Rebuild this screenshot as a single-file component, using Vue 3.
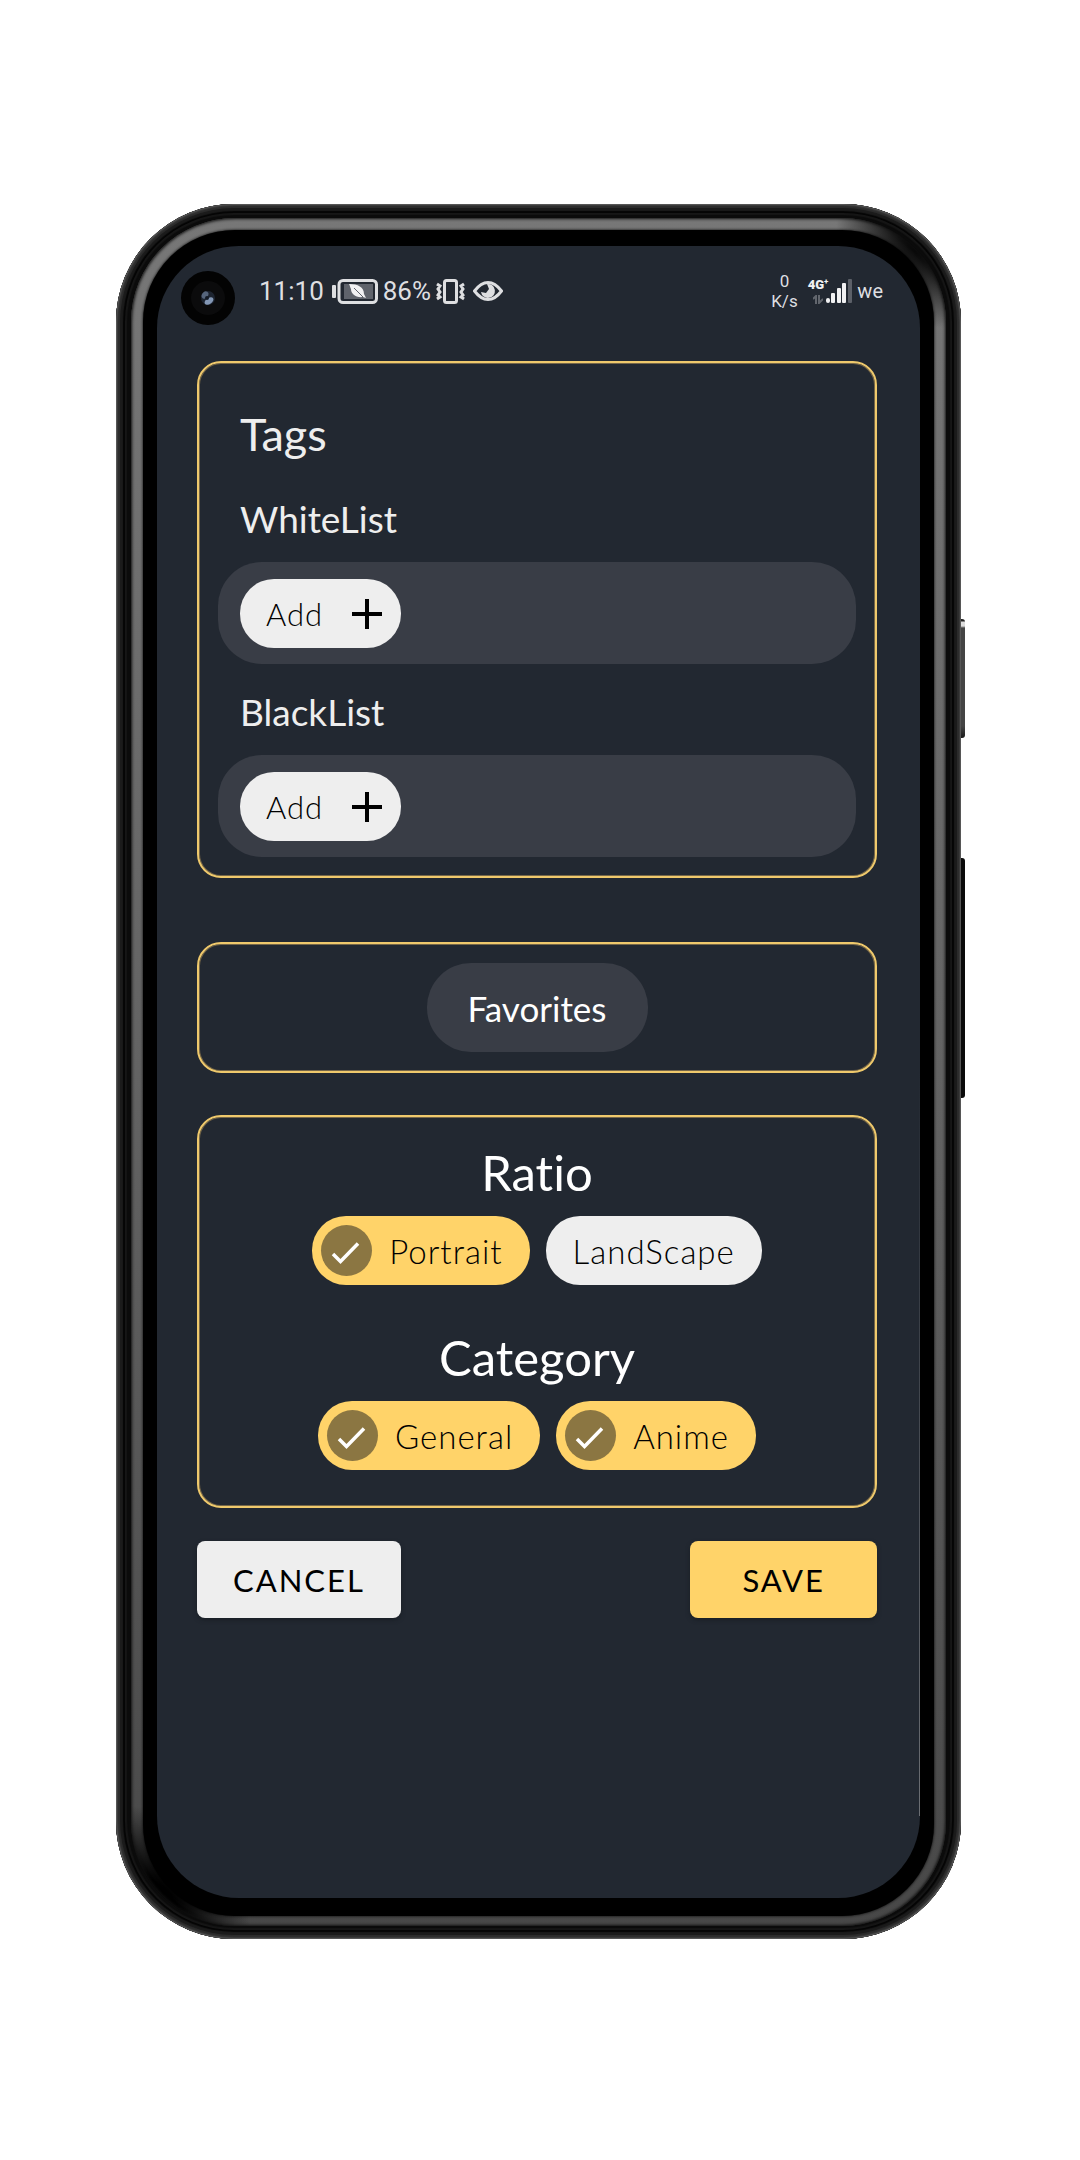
<script setup>
import { ref } from 'vue'

const lists = ['WhiteList', 'BlackList']

const groups = ref([
  {
    title: 'Ratio',
    options: [
      { label: 'Portrait', checked: true },
      { label: 'LandScape', checked: false },
    ],
  },
  {
    title: 'Category',
    options: [
      { label: 'General', checked: true },
      { label: 'Anime', checked: true },
    ],
  },
])
</script>

<template>
  <div class="page">
    <div class="phone">
      <span class="side-key power"></span>
      <span class="side-key volume"></span>
      <div class="ring">
        <div class="bezel">
          <div class="screen">
            <span class="glint"></span>
            <span class="camera">
              <svg width="54" height="54" viewBox="0 0 54 54" aria-hidden="true">
                <circle cx="27" cy="27" r="27" fill="#030303" />
                <circle cx="27" cy="27" r="17" fill="#0b0b0c" />
                <circle cx="27" cy="27" r="7" fill="#1d2430" />
                <ellipse cx="24" cy="24" rx="3" ry="4" fill="#56657c" transform="rotate(35 24 24)" />
                <ellipse cx="28" cy="30" rx="5" ry="3" fill="#8397b5" transform="rotate(-35 28 30)" />
                <circle cx="26" cy="27" r="2" fill="#141a25" />
              </svg>
            </span>

            <header class="status">
              <div class="status-left">
                <span class="clock">11:10</span>
                <svg class="battery" width="46" height="25" viewBox="0 0 46 25" aria-hidden="true">
                  <rect x="0" y="6" width="4" height="13" rx="1" fill="#dedfe1" />
                  <rect x="7" y="1.500" width="37.500" height="22" rx="4" fill="none" stroke="#dedfe1" stroke-width="3" />
                  <rect x="12" y="5" width="29" height="15" fill="#5f636b" />
                  <path d="M17 5c9 0 15 3 15 10l2 4-3-1c-7 1-12-3-12-8-1-2-1-3-2-5z" fill="#f1f1f2" />
                  <path d="M22 9l9 9" stroke="#5f636b" stroke-width="1" />
                </svg>
                <span class="percent">86%</span>
                <svg class="vibrate" width="29" height="25" viewBox="0 0 29 25" aria-hidden="true" fill="none" stroke="#dedfe1">
                  <rect x="8.500" y="1.500" width="12" height="22" rx="2" stroke-width="3" />
                  <path d="M1 5l3 2-2 3 2 3-2 3 2 2-3 2M28 5l-3 2 2 3-2 3 2 3-2 2 3 2" stroke-width="3" />
                </svg>
                <svg class="eye" width="30" height="20" viewBox="0 0 30 20" aria-hidden="true">
                  <path d="M1.500 10C6 4 10 1.500 15 1.500S24 4 28.500 10C24 16 20 18.500 15 18.500S6 16 1.500 10z" fill="none" stroke="#dedfe1" stroke-width="3" />
                  <path d="M14 3a7 7 0 1 1-6 8l5 1 3-4z" fill="#dedfe1" />
                </svg>
              </div>
              <div class="status-right">
                <div class="speed"><span>0</span><span>K/s</span></div>
                <div class="network">
                  <span class="gen">4G<sup>+</sup></span>
                  <svg width="10" height="9" viewBox="0 0 10 9" aria-hidden="true" fill="none" stroke="#62666d" stroke-width="2">
                    <path d="M0 4l3-3v8M6 0v8l4-4" />
                  </svg>
                </div>
                <svg class="bars" width="26" height="24" viewBox="0 0 26 24" aria-hidden="true" fill="#f1f1f2">
                  <rect x="0" y="19" width="4" height="5" rx="2" />
                  <rect x="5" y="14" width="4" height="10" rx="1" />
                  <rect x="11" y="9" width="4" height="15" rx="1" />
                  <rect x="16" y="4" width="4" height="20" rx="1" />
                  <rect x="22" y="0" width="4" height="24" rx="1" fill="#5c6068" />
                </svg>
                <span class="carrier">we</span>
              </div>
            </header>

            <main class="content">
              <section class="card tags">
                <h1>Tags</h1>
                <template v-for="name in lists" :key="name">
                  <h2>{{ name }}</h2>
                  <div class="tray">
                    <button type="button" class="add">
                      Add
                      <svg width="30" height="30" viewBox="0 0 30 30" aria-hidden="true">
                        <path d="M15 0v30M0 15h30" stroke="#000" stroke-width="4" />
                      </svg>
                    </button>
                  </div>
                </template>
              </section>

              <section class="card favorites">
                <button type="button" class="fav">Favorites</button>
              </section>

              <section class="card filters">
                <fieldset v-for="group in groups" :key="group.title">
                  <legend>{{ group.title }}</legend>
                  <div class="chips">
                    <label
                      v-for="option in group.options"
                      :key="option.label"
                      class="chip"
                      :class="{ on: option.checked }"
                    >
                      <input v-model="option.checked" type="checkbox" />
                      <span v-if="option.checked" class="mark">
                        <svg width="51" height="51" viewBox="0 0 51 51" aria-hidden="true">
                          <path d="M12 29l7.500 7.500L37 18.500" fill="none" stroke="#fff" stroke-width="3.500" />
                        </svg>
                      </span>
                      {{ option.label }}
                    </label>
                  </div>
                </fieldset>
              </section>

              <div class="actions">
                <button type="button" class="action cancel">CANCEL</button>
                <button type="button" class="action save">SAVE</button>
              </div>
            </main>
          </div>
        </div>
      </div>
    </div>
  </div>
</template>

<style>
body {
  background: #fff;
}
</style>

<style scoped>
.page {
  padding: 204px 119px 221px 116px;
  font-family: Lato, "Open Sans", sans-serif;
  font-variant-ligatures: none;
}

button {
  border: 0;
  margin: 0;
  font-family: inherit;
  font-variant-ligatures: none;
  cursor: pointer;
}

.phone {
  position: relative;
  padding: 14px 15px 13px;
  border-radius: 118px;
  background: #0b0b0b;
  box-shadow:
    inset 0 0 2px 1px #666,
    inset 0 0 0 4px #2b2b2b,
    inset 0 0 1px 7px #1b1b1b,
    inset 0 0 0 9px #050505,
    inset 0 0 1px 11px #161616;
}

.side-key {
  position: absolute;
  left: 100%;
  width: 4px;
  border-radius: 0 3px 3px 0;
}

.power {
  top: 415px;
  height: 119px;
  background: linear-gradient(#222 0 2px, #ddd 3px 7px, #444 9px 107px, #1a1a1a);
}

.volume {
  top: 654px;
  height: 240px;
  background: #0a0a0a;
}

.ring {
  padding: 12px 12px 10px;
  border-radius: 104px;
  background:
    radial-gradient(circle at 100% 0, #000 40px, transparent 110px),
    radial-gradient(circle at 0 100%, #000 50px, transparent 120px),
    linear-gradient(#777, #636363 50%, #484848);
  box-shadow: inset 0 0 3px 1px #111;
}

.bezel {
  padding: 16px 14px 18px;
  border-radius: 92px;
  background: #000;
  box-shadow: 0 0 3px #000;
}

.screen {
  position: relative;
  padding-bottom: 280px;
  border-radius: 82px;
  background: #222831;
}

.glint {
  position: absolute;
  right: 0;
  top: 50%;
  bottom: 82px;
  width: 1px;
  background: linear-gradient(transparent, #6b6e73);
}

.camera {
  position: absolute;
  left: 24px;
  top: 25px;
  display: flex;
}

.status {
  display: flex;
  justify-content: space-between;
  align-items: center;
  height: 90px;
  padding: 0 37px 0 102px;
  color: #dedfe1;
  font-family: Roboto, sans-serif;
}

.status-left,
.status-right {
  display: flex;
  align-items: center;
}

.clock,
.percent {
  font-size: 26px;
  line-height: 32px;
}

.battery {
  margin: 0 5px 0 8px;
}

.vibrate {
  margin: 0 8px 0 5px;
}

.speed {
  display: flex;
  flex-direction: column;
  align-items: center;
  margin-right: 10px;
  font-size: 17px;
  line-height: 20px;
}

.network {
  display: flex;
  flex-direction: column;
  align-items: center;
  gap: 4px;
  height: 26px;
  margin-right: -2px;
}

.gen {
  font-size: 13px;
  line-height: 13px;
  font-weight: 900;
  color: #f1f1f2;
}

.gen sup {
  font-size: 8px;
  line-height: 1px;
}

.bars {
  margin-right: 5px;
}

.carrier {
  font-size: 20px;
  line-height: 28px;
}

.content {
  padding: 25px 43px 0 40px;
}

.card {
  border: 2px solid #efc96c;
  border-radius: 24px;
  box-shadow: inset 0 0 0 1px #756648;
}

.tags {
  padding: 35px 19px 19px;
}

h1,
h2 {
  margin: 0;
  padding-left: 22px;
  color: #eee;
  font-weight: 400;
}

h1 {
  font-size: 45px;
  line-height: 73px;
}

h2 {
  padding-top: 4px;
  font-size: 37px;
  line-height: 87px;
}

.tray {
  padding: 17px 22px 16px;
  border-radius: 44px;
  background: #393d46;
}

.add {
  display: flex;
  align-items: center;
  justify-content: space-between;
  width: 161px;
  height: 69px;
  padding: 0 19px 0 26px;
  border-radius: 34px;
  background: #eee;
  color: #000;
  font-size: 31px;
  font-weight: 300;
  letter-spacing: 1px;
}

.favorites {
  display: flex;
  justify-content: center;
  margin-top: 64px;
  padding: 19px;
}

.fav {
  height: 89px;
  padding: 0 41px;
  border-radius: 44px;
  background: #393d46;
  color: #fff;
  font-size: 35px;
}

.filters {
  margin-top: 42px;
  padding: 25px 19px 36px;
}

fieldset {
  min-width: 0;
  margin: 0;
  padding: 0;
  border: 0;
}

fieldset + fieldset {
  margin-top: 42px;
}

legend {
  width: 100%;
  padding: 0;
  color: #fff;
  font-size: 49px;
  line-height: 60px;
  text-align: center;
}

.chips {
  display: flex;
  justify-content: center;
  gap: 16px;
  padding-top: 14px;
}

.chip {
  position: relative;
  display: flex;
  align-items: center;
  gap: 17px;
  height: 69px;
  padding: 0 27px;
  border-radius: 34px;
  background: #eee;
  color: #000;
  font-size: 33px;
  font-weight: 300;
  letter-spacing: 1px;
}

.chip.on {
  padding-left: 9px;
  background: #ffd369;
}

.chip input {
  position: absolute;
  inset: 0;
  margin: 0;
  opacity: 0;
}

.mark {
  display: flex;
  border-radius: 50%;
  background: #8b7642;
}

.actions {
  display: flex;
  justify-content: space-between;
  margin-top: 33px;
}

.action {
  height: 77px;
  padding: 0 36px;
  border-radius: 8px;
  color: #000;
  font-size: 31px;
  letter-spacing: 2px;
  box-shadow: 0 2px 4px #191e25;
}

.cancel {
  background: #eee;
}

.save {
  padding: 0 52px;
  background: #ffd369;
}
</style>
